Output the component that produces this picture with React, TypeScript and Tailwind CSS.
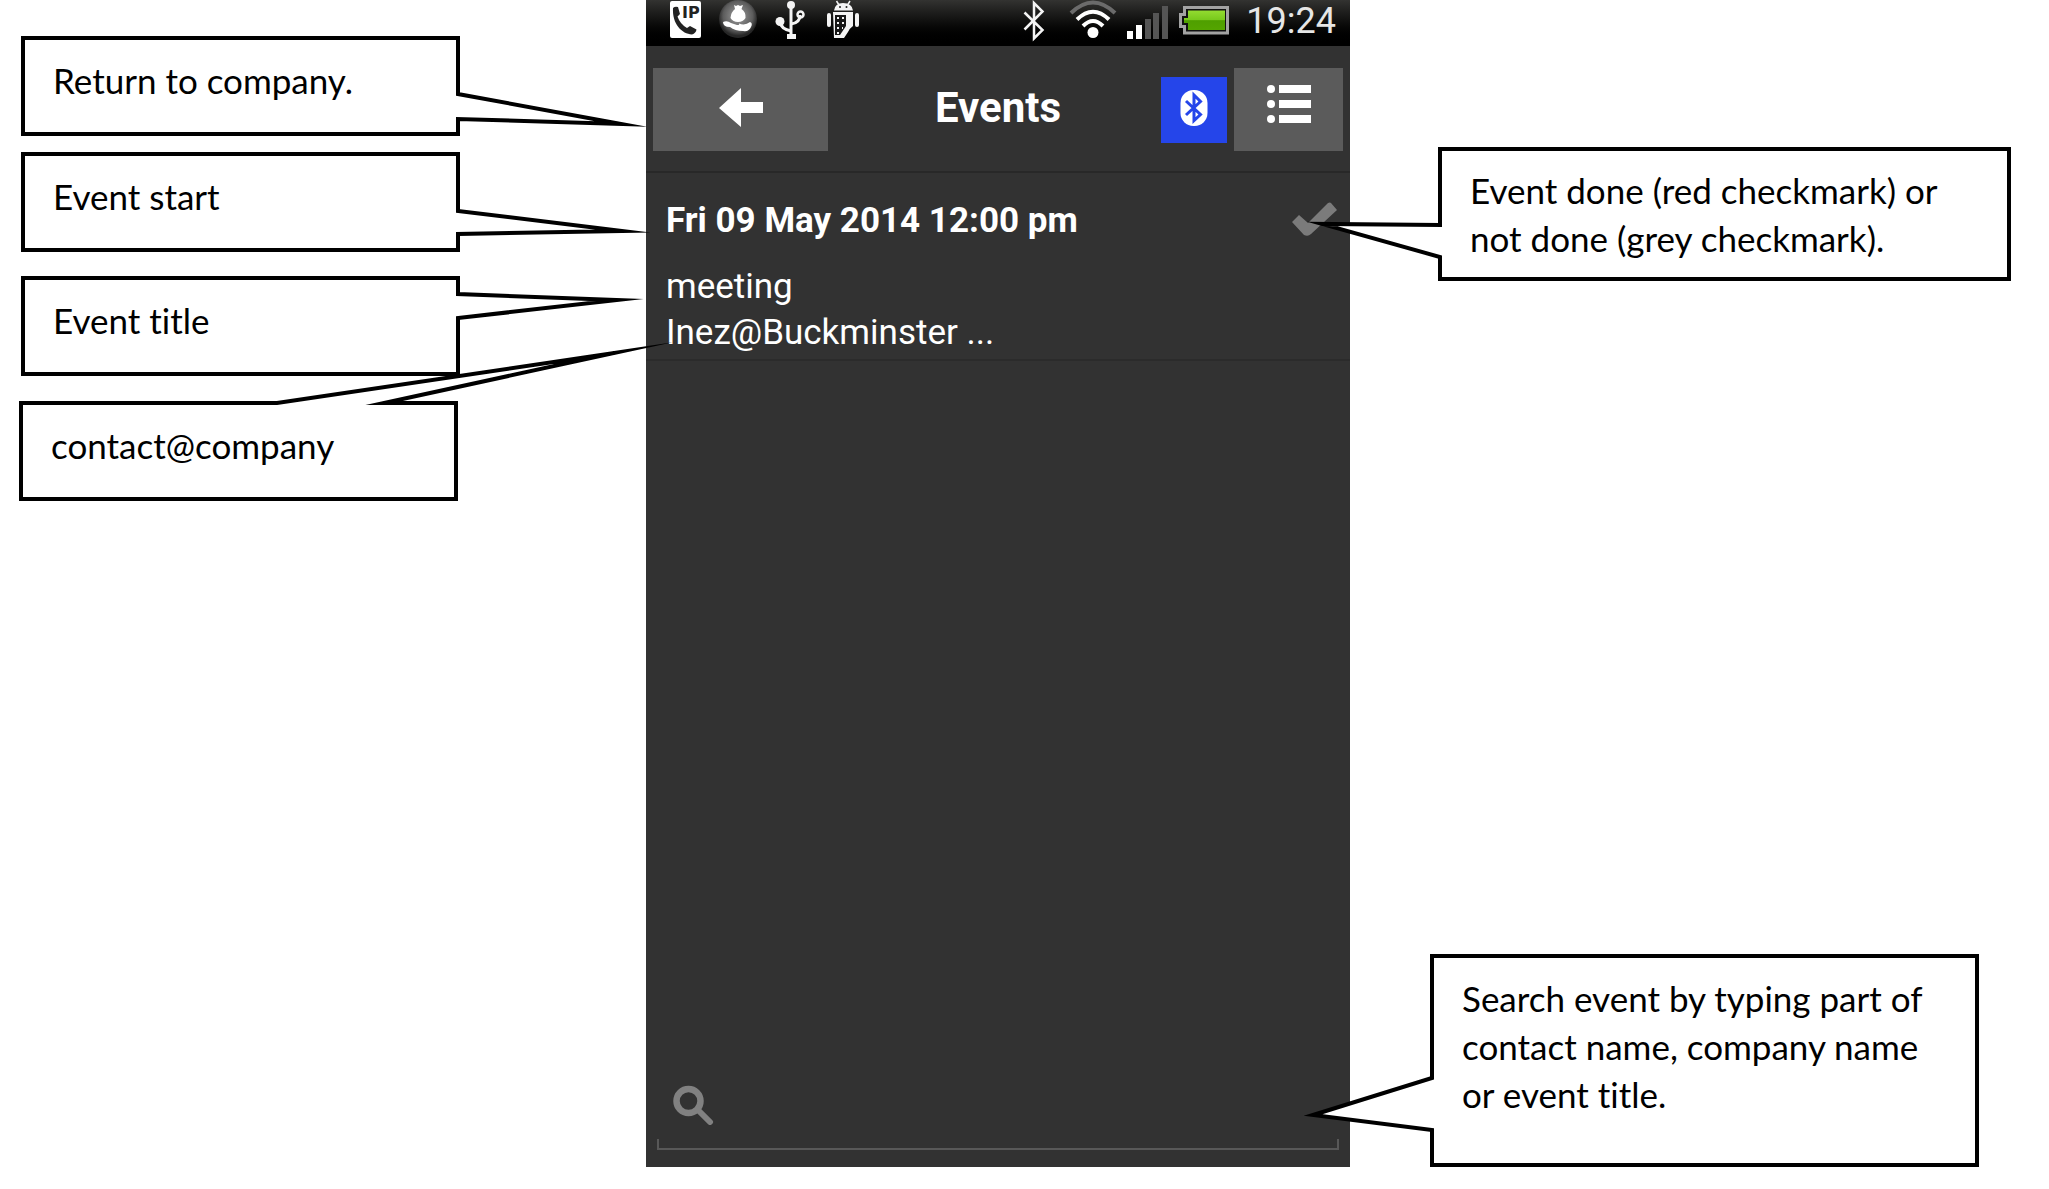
import type { ReactNode } from "react";

type Point = [number, number];

/* Pointer of a callout: base edges a and b on the box border, meeting at tip. */
function Pointer({ lead, a, tip, b, trail }: { lead: Point; a: Point; tip: Point; b: Point; trail: Point }) {
  const line = [lead, a, tip, b, trail].map((p) => p.join(",")).join(" ");
  const base = [a, tip, b].map((p) => p.join(",")).join(" ");
  return (
    <svg className="pointer-events-none absolute top-0 left-0 z-10 overflow-visible" width="1" height="1" aria-hidden="true">
      <polyline points={`${a.join(",")} ${b.join(",")}`} stroke="#fff" strokeWidth="6" />
      <polygon points={base} fill="#fff" />
      <polyline points={line} fill="none" stroke="#000" strokeWidth="4" strokeMiterlimit="60" />
    </svg>
  );
}

function Callout({ className, children, pointer }: { className: string; children: ReactNode; pointer: ReactNode }) {
  return (
    <aside className={`relative border-4 border-black bg-white pl-7 font-[Lato,sans-serif] text-[35px] leading-[48px] text-black [font-variant-ligatures:none] ${className}`}>
      <p>{children}</p>
      {pointer}
    </aside>
  );
}

/* Pointer on the right edge; the anchor has zero width at the box's inner right side. */
function RightPointer({ top, bottom, tip }: { top: number; bottom: number; tip: Point }) {
  return (
    <div className="absolute top-0 left-full">
      <Pointer lead={[2, top - 5]} a={[2, top]} tip={tip} b={[2, bottom]} trail={[2, bottom + 5]} />
    </div>
  );
}

function LeftPointer({ top, bottom, tip }: { top: number; bottom: number; tip: Point }) {
  return <Pointer lead={[-2, top - 5]} a={[-2, top]} tip={tip} b={[-2, bottom]} trail={[-2, bottom + 5]} />;
}

function StatusBar() {
  return (
    <div className="flex h-[46px] items-start bg-linear-to-b from-[#333331] to-black pr-3.5 pl-6">
      <svg width="31" height="40" viewBox="0 0 31 40" className="mr-[17px]">
        <rect x="0" y="1" width="31" height="37" rx="2" fill="#fff" />
        <path d="M3 8 Q5 6 8 7 L10 14 L7.500 16.500 Q10 24 17 28 L20 26 L26.500 29.500 Q26 33 22 34.500 C12 34 2 24 3 8 Z" fill="#222" />
        <text x="12" y="18" fontSize="16" fontFamily="DejaVu Sans, sans-serif" fontWeight="700" fill="#222">IP</text>
      </svg>
      <svg width="40" height="40" viewBox="0 0 40 40" className="mr-[17px]">
        <defs>
          <radialGradient id="coin" cx="0.5" cy="0.42" r="0.52">
            <stop offset="0" stopColor="#a0a0a0" />
            <stop offset="0.75" stopColor="#5c5c5c" />
            <stop offset="1" stopColor="#262626" />
          </radialGradient>
        </defs>
        <circle cx="20" cy="19" r="19" fill="url(#coin)" />
        <path d="M16 5 L18 6 L20 5 L22 6 L25 5 L23.500 9 Q28 12 27.500 18 Q25 22 20 22 Q15 22 12.500 18 Q13 12 17 9 Z" fill="#fff" />
        <path d="M5 22 Q9 20 13 23 L19 25 Q22 25.500 21 23.500 Q27 26 32 22 Q35 23 33 27 Q31 32 25 31 Q17 31 12 27 Q5 27 5 22 Z" fill="#fff" />
      </svg>
      <svg width="32" height="40" viewBox="0 0 32 40" fill="none" stroke="#f4f4f4" strokeWidth="3" className="mr-[19px]">
        <path d="M16 4 V37" />
        <path d="M5 22 Q6 29 16 31 M16 24 Q25 23 25 15" />
        <circle cx="16" cy="5" r="4" fill="#f4f4f4" stroke="none" />
        <circle cx="5" cy="21.500" r="4.500" fill="#f4f4f4" stroke="none" />
        <circle cx="25.500" cy="14.500" r="3" strokeWidth="2.500" />
        <rect x="12" y="34" width="9" height="5" fill="#f4f4f4" stroke="none" />
      </svg>
      <svg width="34" height="40" viewBox="0 0 34 40">
        <path d="M8 10.500 Q9 3 17 3 Q26 3 27 10.500 Z" fill="#f4f4f4" />
        <path d="M10.500 1 L13 5 M24 1 L21.500 5" stroke="#f4f4f4" strokeWidth="1.500" />
        <circle cx="14" cy="7" r="1" fill="#222" />
        <circle cx="20.500" cy="7" r="1" fill="#222" />
        <rect x="1" y="13" width="4" height="14" rx="2" fill="#f4f4f4" />
        <rect x="29" y="13" width="4" height="14" rx="2" fill="#f4f4f4" />
        <path d="M7 12 H27 V26 Q24 28 22 32 L18 38 H8 Z" fill="#f4f4f4" />
        <path d="M9 15 H20 V26 L14 35 H9 Z" fill="#181818" />
        <path d="M11 18 H20 M11 23 H20 M11 28 H17 M11 33 H15" stroke="#f4f4f4" strokeWidth="2" strokeDasharray="2 3" />
      </svg>
      <svg width="22" height="42" viewBox="0 0 22 42" fill="none" stroke="#f4f4f4" strokeWidth="2.500" className="mr-6 ml-auto">
        <path d="M1.500 12.500 L19.500 30 L11 38.500 V3 L19.500 11.500 L1.500 29.500" />
      </svg>
      <svg width="48" height="40" viewBox="0 0 48 40" fill="none" strokeWidth="4" className="mr-2.5">
        <path d="M2 13 Q24 -8 46 13" stroke="#6b6b6b" />
        <path d="M8 19.500 Q24 4 40 19.500" stroke="#fff" />
        <path d="M14 26 Q24 16 34 26" stroke="#fff" />
        <circle cx="24" cy="32.500" r="5.500" fill="#fff" />
      </svg>
      <svg width="42" height="40" viewBox="0 0 42 40" className="mr-2.5">
        <rect x="0" y="31" width="6" height="8" fill="#fff" />
        <rect x="9" y="25" width="6" height="14" fill="#fff" />
        <rect x="18" y="19" width="6" height="20" fill="#555" />
        <rect x="26" y="13" width="6" height="26" fill="#555" />
        <rect x="35" y="6" width="6" height="33" fill="#555" />
      </svg>
      <svg width="50" height="40" viewBox="0 0 50 40" className="mr-[17px]">
        <defs>
          <linearGradient id="charge" x1="0" y1="0" x2="0" y2="1">
            <stop offset="0" stopColor="#93dc31" />
            <stop offset="0.48" stopColor="#78c91c" />
            <stop offset="0.52" stopColor="#4f9f00" />
            <stop offset="1" stopColor="#54a500" />
          </linearGradient>
        </defs>
        <path d="M5.500 7.500 H48.500 V33 H5.500 V26.500 H1.500 V14.500 H5.500 Z" fill="#111" stroke="#a3a3a3" strokeWidth="3" />
        <path d="M9 10.500 H46 V30 H9 V23 H5 V18 H9 Z" fill="url(#charge)" />
      </svg>
      <time className="font-[Roboto,sans-serif] text-[36px] leading-[42px] text-[#e6e6e6]">19:24</time>
    </div>
  );
}

function Header() {
  return (
    <header className="grid grid-cols-[1fr_auto_1fr] items-center border-b-2 border-[#282828] px-[7px] pt-[22px] pb-5">
      <button type="button" aria-label="Back" className="flex h-[83px] w-[175px] items-center justify-center bg-[#5b5b5b] pb-1">
        <svg width="44" height="40" viewBox="0 0 44 40">
          <path d="M0 20 L22 0 V14 H44 V25 H22 V39 Z" fill="#fff" />
        </svg>
      </button>
      <h1 className="pb-1 text-[42px] leading-[48px] font-bold">Events</h1>
      <div className="flex items-center justify-end gap-[7px]">
        <button type="button" aria-label="Bluetooth" className="flex size-[66px] items-center justify-center bg-[#2545ea] pb-1">
          <svg width="28" height="38" viewBox="0 0 28 38">
            <rect x="0.500" y="1" width="27" height="36" rx="13" fill="#fff" />
            <path d="M6 12 L20.500 25.500 L14 31.500 V6 L20.500 12.500 L6 26" fill="none" stroke="#2545ea" strokeWidth="3" />
          </svg>
        </button>
        <button type="button" aria-label="Menu" className="flex h-[83px] w-[109px] items-start justify-center bg-[#5b5b5b] pt-4">
          <svg width="44" height="40" viewBox="0 0 44 40" fill="#fff">
            <circle cx="4" cy="5" r="4" />
            <circle cx="4" cy="20" r="4" />
            <circle cx="4" cy="35" r="4" />
            <rect x="12" y="1" width="32" height="8" />
            <rect x="12" y="16" width="32" height="8" />
            <rect x="12" y="31" width="32" height="8" />
          </svg>
        </button>
      </div>
    </header>
  );
}

function Phone() {
  return (
    <main className="flex flex-col bg-[#323232] font-[Roboto,sans-serif] text-white">
      <StatusBar />
      <Header />
      <ul>
        <li className="border-b-2 border-[#2b2b2b] px-5 pt-[25px] pb-[3px] text-[35px] leading-[46px]">
          <div className="mb-5 flex items-center justify-between">
            <h2 className="font-bold">Fri 09 May 2014 12:00 pm</h2>
            <svg width="46" height="34" viewBox="0 0 46 34" className="-mr-2 mb-1" role="img" aria-label="Not done">
              <path d="M7 13 L0 20 L12 33 Q16 35 19 32 L45 8 L39 1 Q38 0 36 1 L16 21 Z" fill="#7b7b7b" />
            </svg>
          </div>
          <p>meeting</p>
          <p>Inez@Buckminster ...</p>
        </li>
      </ul>
      <label className="relative mx-[11px] mt-auto mb-[17px] flex h-[66px] items-start pl-4">
        <svg width="41" height="41" viewBox="0 0 41 41" className="shrink-0" fill="none" stroke="#818181" aria-hidden="true">
          <circle cx="15.500" cy="17" r="12" strokeWidth="6.500" />
          <path d="M25 26 L37 38" strokeWidth="6" strokeLinecap="round" />
        </svg>
        <input type="search" aria-label="Search events" className="h-full min-w-0 flex-1 bg-transparent px-3 text-[35px] outline-none" />
        <span className="absolute inset-x-0 bottom-0 h-[11px] border-x-2 border-b-2 border-[#585858]" />
      </label>
    </main>
  );
}

export default function App() {
  return (
    <div className="grid min-h-screen grid-cols-[646fr_704fr_699fr] bg-white pb-[22px]">
      <section className="relative z-10 pt-9 pr-[186px] pl-[21px]">
        <Callout className="pt-4 pb-7" pointer={<RightPointer top={54} bottom={79} tip={[165, 84]} />}>
          Return to company.
        </Callout>
        <Callout className="mt-4 pt-4 pb-7" pointer={<RightPointer top={55} bottom={78} tip={[166, 75]} />}>
          Event start
        </Callout>
        <Callout className="mt-6 pt-4 pb-7" pointer={<RightPointer top={14} bottom={38} tip={[161, 20]} />}>
          Event title
        </Callout>
        <Callout
          className="mt-[25px] -ml-0.5 mr-0.5 pt-4 pb-7"
          pointer={<Pointer lead={[249, -2]} a={[254, -2]} tip={[591, -52]} b={[361, -2]} trail={[386, -2]} />}
        >
          contact@company
        </Callout>
      </section>
      <Phone />
      <section className="relative z-10 flex flex-col justify-between pt-[147px]">
        <Callout className="mr-[38px] ml-[88px] pt-[15px] pb-[15px]" pointer={<LeftPointer top={74} bottom={106} tip={[-120, 73]} />}>
          Event done (red checkmark) or
          <br />
          not done (grey checkmark).
        </Callout>
        <Callout className="mr-[70px] ml-20 pt-4 pb-[45px]" pointer={<LeftPointer top={120} bottom={172} tip={[-121, 157]} />}>
          Search event by typing part of
          <br />
          contact name, company name
          <br />
          or event title.
        </Callout>
      </section>
    </div>
  );
}
